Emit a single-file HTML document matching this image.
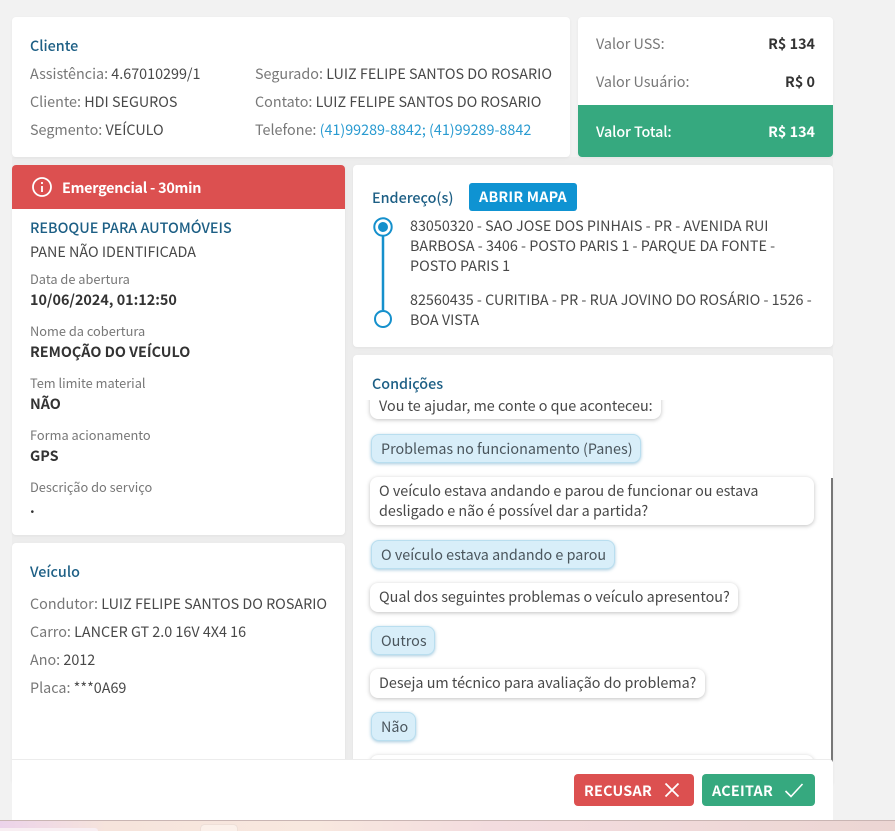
<!DOCTYPE html>
<html lang="pt-BR"><head><meta charset="utf-8"><title>Serviço</title>
<style>
html,body{margin:0;padding:0;width:895px;height:831px;overflow:hidden;background:#f2f2f2}
body{position:relative;font-family:"Noto Sans CJK JP","Liberation Sans",sans-serif;font-size:14.35px;color:#484848}
.c{position:absolute;background:#fff;border-radius:4px;box-shadow:0 1px 3px rgba(0,0,0,.05)}
.t{position:absolute;white-space:nowrap;line-height:20px}
.g{color:#777}.h{color:#1d5f85;font-weight:500}.s{font-size:12.8px;color:#777}.b{font-weight:700;color:#333}
.m{position:absolute;left:370px;background:#fff;border-radius:8px;box-shadow:0 1px 4px rgba(0,0,0,.25);padding:0 10px;line-height:20px;box-sizing:border-box;white-space:nowrap}
.u{background:#d8eef9;color:#4a555c;border:1px solid #b9deef;padding-left:9px;box-shadow:0 1px 3px rgba(30,120,170,.4)}
.btn{position:absolute;top:774px;height:32px;border-radius:4px;color:#fff;font-weight:700;line-height:33px;letter-spacing:.25px}
</style></head><body>
<div style="position:absolute;left:12px;top:157px;width:821px;height:603px;background:#ededed"></div>
<div class="c" style="left:12px;top:17px;width:558px;height:140px"></div>
<div class="t h" style="left:30px;top:36px">Cliente</div>
<div class="t g" style="left:30px;top:64px">Assistência: <span style="color:#484848">4.67010299/1</span></div>
<div class="t g" style="left:30px;top:92px">Cliente: <span style="color:#484848">HDI SEGUROS</span></div>
<div class="t g" style="left:30px;top:120px">Segmento: <span style="color:#484848">VEÍCULO</span></div>
<div class="t g" style="left:255px;top:64px">Segurado: <span style="color:#484848">LUIZ FELIPE SANTOS DO ROSARIO</span></div>
<div class="t g" style="left:255px;top:92px">Contato: <span style="color:#484848">LUIZ FELIPE SANTOS DO ROSARIO</span></div>
<div class="t g" style="left:255px;top:120px">Telefone: <span style="color:#2a9bd1">(41)99289-8842; (41)99289-8842</span></div>

<div class="c" style="left:578px;top:17px;width:255px;height:140px;overflow:hidden"><div style="position:absolute;left:0;top:88px;width:255px;height:52px;background:#36a97f"></div></div>
<div class="t g" style="left:596px;top:34px">Valor USS:</div><div class="t b" style="right:80px;top:34px">R$ 134</div>
<div class="t g" style="left:596px;top:72px">Valor Usuário:</div><div class="t b" style="right:80px;top:72px">R$ 0</div>
<div class="t" style="left:596px;top:122px;color:#fff;font-weight:500;letter-spacing:-.1px">Valor Total:</div><div class="t" style="right:80px;top:122px;color:#fff;font-weight:700">R$ 134</div>

<div class="c" style="left:12px;top:165px;width:333px;height:370px;overflow:hidden"><div style="height:44px;background:#dc5050"></div></div>
<svg style="position:absolute;left:31px;top:176px" width="22" height="22" viewBox="0 0 22 22" fill="none" stroke="#fff" stroke-width="1.8"><circle cx="11" cy="11" r="9"/><path d="M11 10v6M11 6v2"/></svg>
<div class="t" style="left:62px;top:178px;color:#fff;font-weight:700;letter-spacing:-.25px">Emergencial - 30min</div>
<div class="t h" style="left:30px;top:218px">REBOQUE PARA AUTOMÓVEIS</div>
<div class="t" style="left:30px;top:242px">PANE NÃO IDENTIFICADA</div>
<div class="t s" style="left:30px;top:269px">Data de abertura</div><div class="t b" style="left:30px;top:290px">10/06/2024, 01:12:50</div>
<div class="t s" style="left:30px;top:321px">Nome da cobertura</div><div class="t b" style="left:30px;top:342px">REMOÇÃO DO VEÍCULO</div>
<div class="t s" style="left:30px;top:373px">Tem limite material</div><div class="t b" style="left:30px;top:394px">NÃO</div>
<div class="t s" style="left:30px;top:425px">Forma acionamento</div><div class="t b" style="left:30px;top:446px">GPS</div>
<div class="t s" style="left:30px;top:477px">Descrição do serviço</div><div class="t b" style="left:30px;top:498px">.</div>

<div class="c" style="left:12px;top:543px;width:333px;height:240px"></div>
<div class="t h" style="left:30px;top:562px">Veículo</div>
<div class="t g" style="left:30px;top:594px">Condutor: <span style="color:#484848">LUIZ FELIPE SANTOS DO ROSARIO</span></div>
<div class="t g" style="left:30px;top:622px">Carro: <span style="color:#484848">LANCER GT 2.0 16V 4X4 16</span></div>
<div class="t g" style="left:30px;top:650px">Ano: <span style="color:#484848">2012</span></div>
<div class="t g" style="left:30px;top:678px">Placa: <span style="color:#484848">***0A69</span></div>

<div class="c" style="left:353px;top:165px;width:480px;height:182px"></div>
<div class="t h" style="left:372px;top:188px">Endereço(s)</div>
<div style="position:absolute;left:469px;top:183px;width:108px;height:28px;background:#0f93d2;border-radius:3px;color:#fff;font-weight:700;text-align:center;line-height:28px;letter-spacing:.2px">ABRIR MAPA</div>
<svg style="position:absolute;left:370px;top:214px" width="26" height="116" fill="none" stroke="#1590cc" stroke-width="2"><path d="M13 22V96" stroke-width="2.5"/><circle cx="13" cy="13" r="8.7"/><circle cx="13" cy="13" r="5" fill="#1590cc" stroke="none"/><circle cx="13" cy="105" r="8" fill="#fff"/></svg>
<div class="t" style="left:410px;top:216px">83050320 - SAO JOSE DOS PINHAIS - PR - AVENIDA RUI</div>
<div class="t" style="left:410px;top:236px">BARBOSA - 3406 - POSTO PARIS 1 - PARQUE DA FONTE -</div>
<div class="t" style="left:410px;top:256px">POSTO PARIS 1</div>
<div class="t" style="left:410px;top:290px">82560435 - CURITIBA - PR - RUA JOVINO DO ROSÁRIO - 1526 -</div>
<div class="t" style="left:410px;top:310px">BOA VISTA</div>

<div class="c" style="left:353px;top:355px;width:480px;height:430px"></div>
<div class="t h" style="left:372px;top:374px">Condições</div>
<div style="position:absolute;left:353px;top:400px;width:480px;height:360px;overflow:hidden">
<div class="m" style="left:17px;top:-10px;height:29px;padding-top:6px;width:291px;padding-left:9px">Vou te ajudar, me conte o que aconteceu:</div>
<div class="m u" style="left:18px;top:34px;height:29px;padding-top:4px;width:270px">Problemas no funcionamento (Panes)</div>
<div class="m" style="left:17px;top:77px;height:48px;padding-top:4px;width:444px;padding-left:9px">O veículo estava andando e parou de funcionar ou estava<br>desligado e não é possível dar a partida?</div>
<div class="m u" style="left:18px;top:140px;height:29px;padding-top:4px;width:244px">O veículo estava andando e parou</div>
<div class="m" style="left:17px;top:183px;height:29px;padding-top:4px;width:368px;padding-left:9px">Qual dos seguintes problemas o veículo apresentou?</div>
<div class="m u" style="left:18px;top:226px;height:29px;padding-top:4px;width:64px">Outros</div>
<div class="m" style="left:17px;top:269px;height:29px;padding-top:4px;width:335px;padding-left:9px">Deseja um técnico para avaliação do problema?</div>
<div class="m u" style="left:18px;top:312px;height:29px;padding-top:4px;width:45px">Não</div>
<div class="m" style="left:17px;top:355px;height:29px;width:444px"></div>
</div>
<div style="position:absolute;left:831px;top:478px;width:2px;height:284px;background:#777"></div>

<div style="position:absolute;left:12px;top:759px;width:821px;height:61px;background:#fff;border-top:1px solid #ececec;box-sizing:border-box;border-radius:0 4px 0 0"></div>
<div class="btn" style="left:574px;width:120px;background:#dc5050"><span style="position:absolute;left:10px">RECUSAR</span><svg style="position:absolute;left:90px;top:8px" width="16" height="16" fill="none" stroke="#fff" stroke-width="1.8"><path d="M1.500 1.500L14.500 14.500M14.500 1.500L1.500 14.500"/></svg></div>
<div class="btn" style="left:702px;width:113px;background:#36a97f"><span style="position:absolute;left:10px">ACEITAR</span><svg style="position:absolute;left:82px;top:8px" width="20" height="16" fill="none" stroke="#fff" stroke-width="1.6"><path d="M1.500 9L7 14.500L18.500 2"/></svg></div>

<div style="position:absolute;left:0;top:820px;width:895px;height:11px;background:linear-gradient(90deg,#ecd3ea 0,#f6e4dc 12%,#f8e8df 35%,#f3dcdf 55%,#ecd6d3 100%);border-top:1px solid #c9b5b3;box-sizing:border-box"></div>
<div style="position:absolute;left:0;top:828px;width:98px;height:3px;background:#f8eef2;border-radius:0 6px 0 0"></div>
<div style="position:absolute;left:201px;top:825px;width:36px;height:6px;background:#fbf0ea;border-radius:3px 3px 0 0;box-shadow:0 0 1px #bbb"></div>
</body></html>
